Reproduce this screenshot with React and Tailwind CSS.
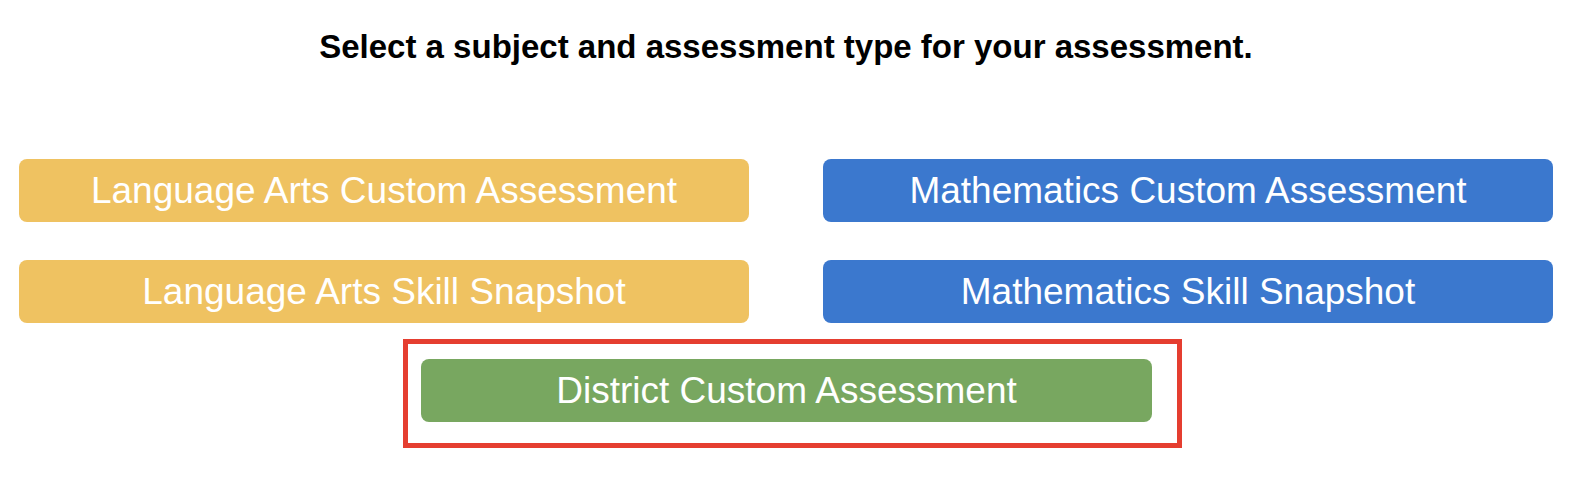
export default function App() {
  const btn =
    "h-[63px] w-full rounded-[8px] text-white text-[37px] leading-none flex items-center justify-center";

  return (
    <div className="w-[1592px] h-[482px] bg-white pl-[19px] pr-[39px] font-['Liberation_Sans',Arial,sans-serif]">
      {/* Heading */}
      <h1 className="pt-[30px] text-center text-[33px] leading-[33px] font-bold text-black">
        Select a subject and assessment type for your assessment.
      </h1>

      {/* Subject buttons */}
      <div className="mt-[96px] grid grid-cols-2 gap-x-[74px] gap-y-[38px]">
        <button className={`${btn} bg-[#efc261]`}>Language Arts Custom Assessment</button>
        <button className={`${btn} bg-[#3b78ce]`}>Mathematics Custom Assessment</button>
        <button className={`${btn} bg-[#efc261]`}>Language Arts Skill Snapshot</button>
        <button className={`${btn} bg-[#3b78ce]`}>Mathematics Skill Snapshot</button>
      </div>

      {/* Highlighted district option */}
      <div className="mt-[16px] ml-[384px] w-[779px] border-[5px] border-[#e53e30] pt-[15px] pb-[21px] pl-[13px] pr-[25px]">
        <button className={`${btn} bg-[#78a760]`}>District Custom Assessment</button>
      </div>
    </div>
  );
}
